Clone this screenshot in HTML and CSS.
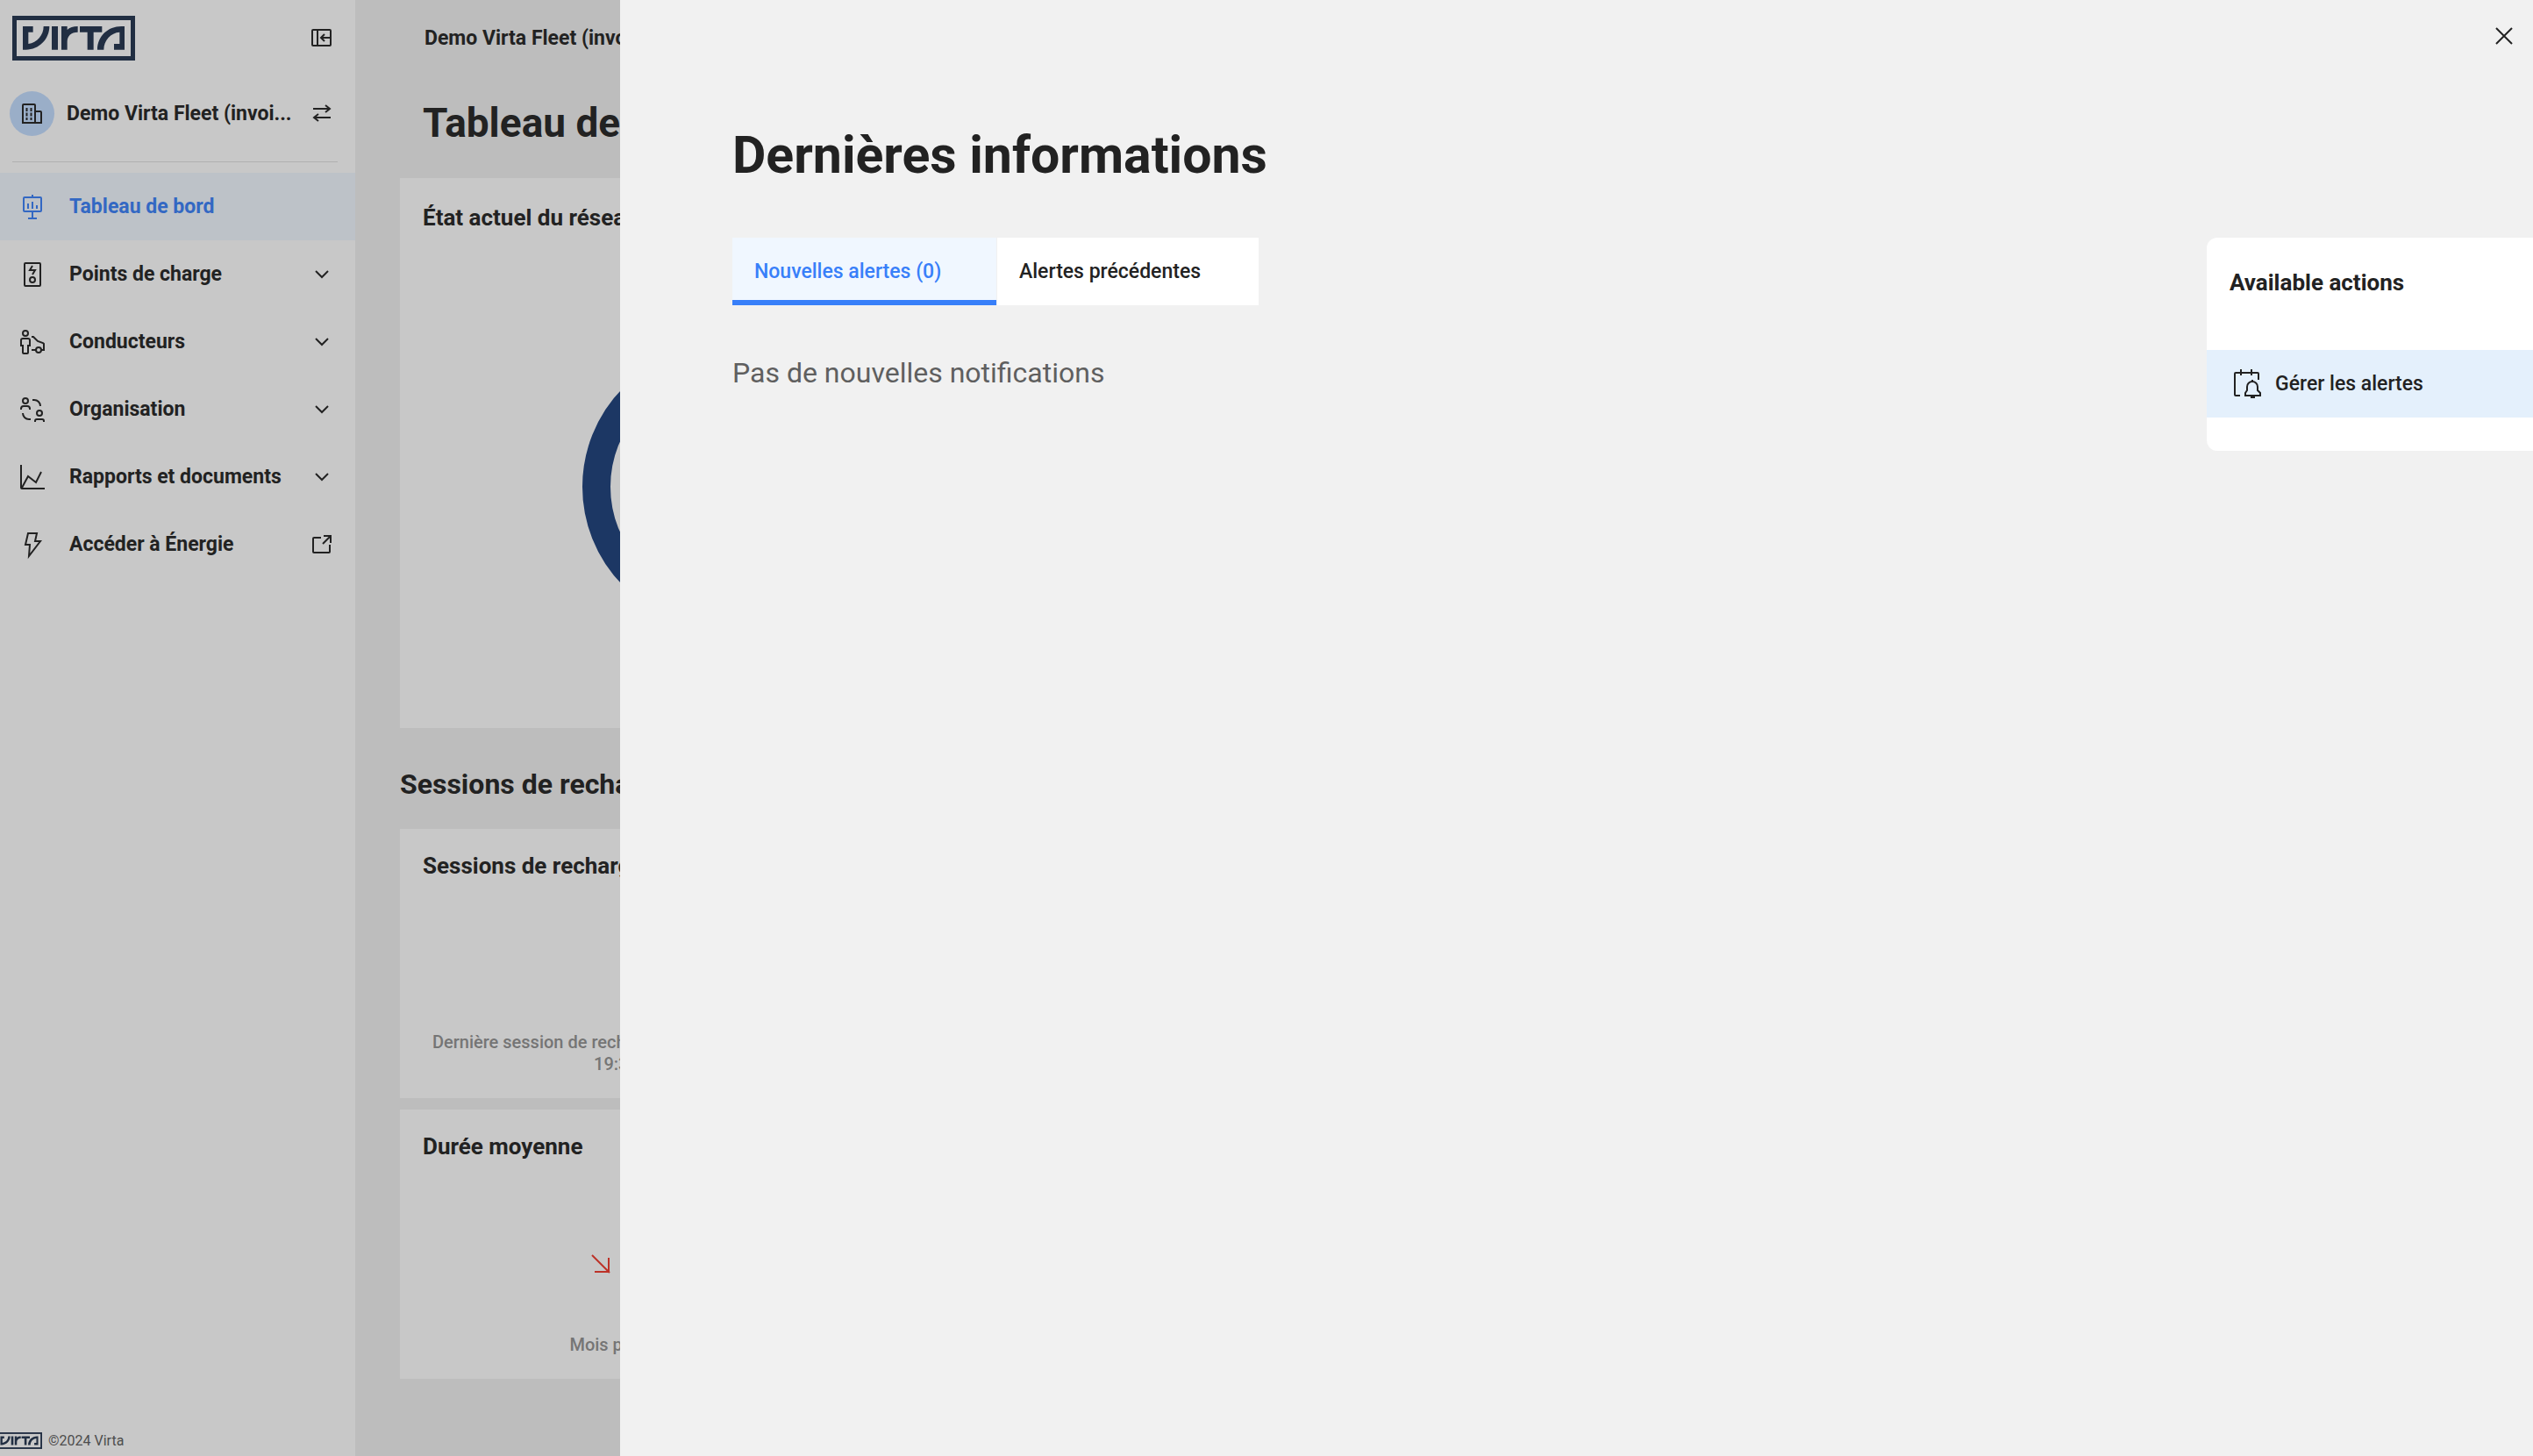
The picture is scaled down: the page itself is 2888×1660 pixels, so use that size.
FILE: index.html
```html
<!DOCTYPE html>
<html lang="fr">
<head>
    <meta charset="utf-8">
    <title>Virta - Tableau de bord</title>
    <link rel="stylesheet" href="styles.css">
</head>
<body>
    <svg class="sprite" aria-hidden="true">
        <symbol id="logo" viewBox="0 0 420 153">
            <rect x="7.5" y="7.5" width="405" height="138" fill="none" stroke="currentColor" stroke-width="15"/>
            <path fill="currentColor" d="M36 36h35v20H55v40c30-4 52-30 52-60h20c0 44-36 80-80 80H36zM135 36h21v80h-21zM168 36h20v12c8-8 20-12 36-12v20c-24 0-36 14-36 32v28h-20zM231 36h76v20h-29v60h-21V56h-26zM384 36v80h-36V96h19V56c-30 2-54 28-54 60h-22c0-46 36-80 82-80z"/>
        </symbol>
        <symbol id="chevron" viewBox="0 0 16 10">
            <path d="M1 1l7 7 7-7"/>
        </symbol>
    </svg>

    <div class="app">
        <aside class="sidebar">
            <div class="sidebar-top">
                <svg class="logo" role="img" aria-label="Virta"><use href="#logo"/></svg>
                <button class="icon-btn" aria-label="Réduire le menu">
                    <svg class="icon" width="23" height="20" viewBox="0 0 23 20"><rect x="1" y="1" width="21" height="18" rx="1"/><path d="M7 1v18M22 10H11M15 6l-4 4 4 4"/></svg>
                </button>
            </div>
            <div class="account">
                <span class="avatar">
                    <svg class="icon" width="23" height="23" viewBox="0 0 23 23"><path d="M1 22V2a1 1 0 0 1 1-1h12a1 1 0 0 1 1 1v20zM15 9h6a1 1 0 0 1 1 1v12h-7"/><path d="M5.500 5v14M10.500 5v14" stroke-dasharray="4 1.500"/></svg>
                </span>
                <span class="account-name">Demo Virta Fleet (invoi...</span>
                <button class="icon-btn" aria-label="Changer d'organisation">
                    <svg class="icon" width="20" height="18" viewBox="0 0 20 18"><path d="M0 4h19M14 0l5 4-5 4M20 14H1M6 10l-5 4 5 4"/></svg>
                </button>
            </div>
            <nav class="menu">
                <a href="#" class="menu-item active">
                    <svg class="icon" width="28" height="28" viewBox="0 0 28 28"><rect x="4" y="3" width="20" height="16" rx="1"/><path d="M14 0v3M14 19v8M9 27h10M9 10v6M14 8v8M19 12v4"/></svg>
                    <span>Tableau de bord</span>
                </a>
                <a href="#" class="menu-item">
                    <svg class="icon" width="28" height="28" viewBox="0 0 28 28"><rect x="5" y="1" width="18" height="26" rx="1"/><path d="M14 4l-3 5h6l-3 5"/><circle cx="14" cy="20" r="3"/></svg>
                    <span>Points de charge</span>
                    <svg class="chevron"><use href="#chevron"/></svg>
                </a>
                <a href="#" class="menu-item">
                    <svg class="icon" width="28" height="28" viewBox="0 0 28 28"><circle cx="6" cy="4" r="3"/><path d="M3 10h6a2 2 0 0 1 2 2v6H9v8a1 1 0 0 1-1 1H4a1 1 0 0 1-1-1v-8H1v-6a2 2 0 0 1 2-2z"/><path d="M13 8h2l5 5 6 2 1 1v7h-3M18 23h-5"/><circle cx="21" cy="23" r="3"/></svg>
                    <span>Conducteurs</span>
                    <svg class="chevron"><use href="#chevron"/></svg>
                </a>
                <a href="#" class="menu-item">
                    <svg class="icon" width="28" height="28" viewBox="0 0 28 28"><circle cx="6" cy="4" r="3"/><path d="M1 14v-1a3 3 0 0 1 3-3h4a3 3 0 0 1 3 3v1"/><circle cx="22" cy="18" r="3"/><path d="M17 28v-1a2 2 0 0 1 2-2h6a2 2 0 0 1 2 2v1M14 3h2a7 7 0 0 1 7 7M3 18a7 7 0 0 0 7 7h2"/></svg>
                    <span>Organisation</span>
                    <svg class="chevron"><use href="#chevron"/></svg>
                </a>
                <a href="#" class="menu-item">
                    <svg class="icon" width="28" height="28" viewBox="0 0 28 28"><path d="M1 0v26a1 1 0 0 0 1 1h26M2 26l7-13 9 7 6-12"/></svg>
                    <span>Rapports et documents</span>
                    <svg class="chevron"><use href="#chevron"/></svg>
                </a>
                <a href="#" class="menu-item">
                    <svg class="icon" width="28" height="28" viewBox="0 0 28 28"><path d="M9 1h10l-2 9h6L10 27l1-13H6z"/></svg>
                    <span>Accéder à Énergie</span>
                    <svg class="icon" width="22" height="22" viewBox="0 0 22 22"><path d="M10 3H2a1 1 0 0 0-1 1v15a1 1 0 0 0 1 1h17a1 1 0 0 0 1-1v-8M13 1h8v8M21 1l-9 9"/></svg>
                </a>
            </nav>
            <footer class="sidebar-footer">
                <svg class="logo-small" aria-hidden="true"><use href="#logo"/></svg>
                <span>©2024 Virta</span>
            </footer>
        </aside>

        <main class="content">
            <div class="topbar">Demo Virta Fleet (invoicing)</div>
            <h1>Tableau de bord</h1>
            <section class="card network">
                <h3>État actuel du réseau</h3>
                <svg class="donut" viewBox="0 0 320 320"><circle cx="160" cy="160" r="144"/></svg>
            </section>
            <h2>Sessions de recharge</h2>
            <section class="card stat">
                <h3>Sessions de recharge</h3>
                <p>Dernière session de recharge terminée : 29.01.2024<br>19:36 UTC</p>
            </section>
            <section class="card stat">
                <h3>Durée moyenne</h3>
                <div class="trend">
                    <svg class="icon" width="22" height="22" viewBox="0 0 22 22"><path d="M1 1l20 20M20 4v16H4"/></svg>
                    <span>1h 5</span>
                </div>
                <p>Mois précédent :</p>
            </section>
        </main>
    </div>

    <div class="backdrop"></div>

    <div class="drawer" role="dialog" aria-labelledby="drawer-title">
        <div class="drawer-bar">
            <button class="icon-btn" aria-label="Fermer">
                <svg class="icon" width="18" height="18" viewBox="0 0 18 18"><path d="M0 0l18 18M18 0L0 18"/></svg>
            </button>
        </div>
        <h1 id="drawer-title">Dernières informations</h1>
        <div class="drawer-body">
            <div class="alerts">
                <div class="tabs" role="tablist">
                    <button class="tab selected" role="tab" aria-selected="true">Nouvelles alertes (0)</button>
                    <button class="tab" role="tab" aria-selected="false">Alertes précédentes</button>
                </div>
                <p class="empty">Pas de nouvelles notifications</p>
            </div>
            <aside class="actions">
                <h3>Available actions</h3>
                <button class="action">
                    <svg class="icon" width="32" height="34" viewBox="0 0 32 34"><path d="M7 30H2a1 1 0 0 1-1-1V5a1 1 0 0 1 1-1h25a1 1 0 0 1 1 1v7M8 0v7M20 0v7"/><path d="M13 30v-3l2-3v-4a6 6 0 0 1 12 0v4l3 3v3zM21 12v2"/><path d="M19 32h5"/></svg>
                    <span>Gérer les alertes</span>
                </button>
            </aside>
        </div>
    </div>
</body>
</html>
```

FILE: styles.css
```css
* {
    box-sizing: border-box;
}
body {
    margin: 0;
    font-family: Roboto, "Liberation Sans", sans-serif;
    font-size: 23px;
    color: #222;
    background: #f1f1f1;
    overflow: hidden;
}
h1, h2, h3, p {
    margin: 0;
}
button {
    font: inherit;
    color: inherit;
    border: none;
    background: none;
    padding: 0;
    cursor: pointer;
}
svg {
    display: block;
    flex: none;
}
.sprite {
    position: absolute;
    width: 0;
    height: 0;
}
.icon, .chevron {
    fill: none;
    stroke: currentColor;
    stroke-width: 2;
    overflow: visible;
}
.chevron {
    width: 16px;
    height: 10px;
    margin-right: 3px;
}

/* page */
.app {
    display: flex;
    height: 100vh;
}
.sidebar {
    display: flex;
    flex-direction: column;
    flex: none;
    width: 405px;
    background: #fff;
    font-weight: bold;
}
.sidebar-top {
    display: flex;
    align-items: center;
    justify-content: space-between;
    height: 86px;
    padding: 0 27px 0 14px;
}
.logo {
    width: 140px;
    height: 51px;
    color: #21324d;
}
.account {
    display: flex;
    align-items: center;
    height: 99px;
    margin: 0 20px 12px 14px;
    padding: 0 8px 12px 0;
    border-bottom: 1px solid #dfdfdf;
}
.avatar {
    display: flex;
    align-items: center;
    justify-content: center;
    width: 51px;
    height: 51px;
    margin: 0 14px 0 -3px;
    border-radius: 50%;
    background: #c2dcff;
}
.account-name {
    flex: 1;
    white-space: nowrap;
}
.menu-item {
    display: flex;
    align-items: center;
    gap: 28px;
    height: 77px;
    padding: 0 27px 0 23px;
    color: inherit;
    text-decoration: none;
}
.menu-item span {
    flex: 1;
}
.menu-item.active {
    background: #f0f7ff;
    color: #387ff9;
}
.sidebar-footer {
    display: flex;
    align-items: center;
    gap: 7px;
    height: 36px;
    margin-top: auto;
    font-size: 16px;
    font-weight: normal;
    color: #5b5b5b;
}
.logo-small {
    width: 52px;
    height: 19px;
    margin-left: -4px;
    color: #21324d;
}
.content {
    flex: 1;
    padding: 0 51px;
}
.topbar {
    padding-left: 28px;
    line-height: 88px;
    font-weight: bold;
}
.content h1 {
    padding-left: 26px;
    font-size: 46px;
    line-height: 105px;
    margin-bottom: 10px;
}
.content h2 {
    padding-top: 14px;
    font-size: 32px;
    line-height: 101px;
}
h3 {
    font-size: 26px;
    line-height: 38px;
}
.card {
    display: flex;
    flex-direction: column;
    padding: 26px;
    background: #fff;
}
.network {
    width: 736px;
    height: 627px;
}
.donut {
    width: 320px;
    margin: 128px auto 0;
    fill: none;
    stroke: #1a3e7a;
    stroke-width: 32;
}
.stat {
    width: 536px;
    height: 307px;
    margin-bottom: 13px;
    padding-top: 23px;
}
.stat p {
    margin-top: auto;
    font-size: 20px;
    font-weight: 500;
    line-height: 25px;
    text-align: center;
    color: #919191;
}
.trend {
    display: flex;
    justify-content: center;
    align-items: center;
    gap: 16px;
    margin-top: 96px;
    font-size: 32px;
    color: #f0372a;
}

/* drawer */
.backdrop {
    position: fixed;
    inset: 0;
    background: rgba(34, 34, 34, 0.25);
}
.drawer {
    position: fixed;
    inset: 0 0 0 707px;
    background: #f1f1f1;
}
.drawer-bar {
    display: flex;
    align-items: center;
    justify-content: flex-end;
    height: 82px;
    padding-right: 24px;
}
.drawer h1 {
    padding-left: 128px;
    font-size: 59px;
    line-height: 189px;
}
.drawer-body {
    display: flex;
    justify-content: space-between;
    align-items: flex-start;
    padding-left: 128px;
}
.tabs {
    display: flex;
    gap: 1px;
}
.tab {
    width: 298px;
    height: 77px;
    padding: 0 25px;
    background: #fff;
    font-weight: 500;
    text-align: left;
}
.tab.selected {
    width: 301px;
    background: #f0f7ff;
    box-shadow: inset 0 -6px #387ff9;
    color: #387ff9;
}
.empty {
    margin-top: 58px;
    font-size: 32px;
    line-height: 38px;
    color: #5f5f5f;
}
.actions {
    width: 372px;
    padding: 32px 0 38px;
    border-radius: 12px 0 0 12px;
    background: #fff;
}
.actions h3 {
    padding-left: 26px;
    margin-bottom: 58px;
}
.action {
    display: flex;
    align-items: center;
    gap: 15px;
    width: 100%;
    height: 77px;
    padding-left: 31px;
    background: #e4f0fc;
    font-weight: 500;
}
```
